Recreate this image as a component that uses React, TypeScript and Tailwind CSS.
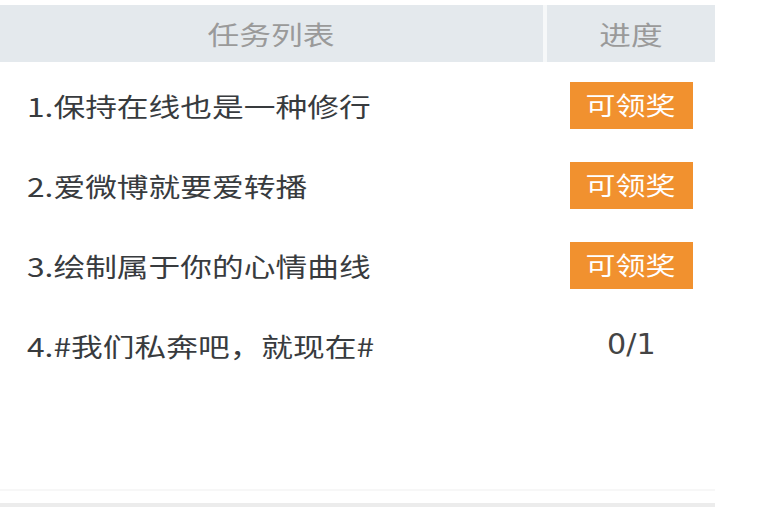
const tasks = [
  { id: 1, title: "1.保持在线也是一种修行", done: true },
  { id: 2, title: "2.爱微博就要爱转播", done: true },
  { id: 3, title: "3.绘制属于你的心情曲线", done: true },
  { id: 4, title: "4.#我们私奔吧，就现在#", done: false, progress: "0/1" },
];

export default function App() {
  return (
    <div
      className="w-[768px] h-[510px] bg-white overflow-hidden"
      style={{ fontFamily: '"Noto Sans CJK SC", "Noto Sans", sans-serif' }}
    >
      <div className="w-[715px] pt-[5px]">
        {/* header */}
        <div className="flex h-[57px] bg-[#e4e9ed]">
          <div className="w-[543px] flex items-center justify-center text-[26px] text-[#9a9a9a]">
            <span className="inline-block scale-x-[1.22]">任务列表</span>
          </div>
          <div className="w-[4px] bg-[#f6f8f9]" />
          <div className="flex-1 flex items-center justify-center text-[26px] text-[#9a9a9a]">
            <span className="inline-block scale-x-[1.22]">进度</span>
          </div>
        </div>

        {/* rows */}
        <div className="pt-[3px] h-[427px]">
          {tasks.map((task) => (
            <div key={task.id} className="flex h-[80px] items-center">
              <div className="w-[543px] pl-[27px] text-[26px] text-[#383b3e]">
                <span className="inline-block origin-left scale-x-[1.22]">{task.title}</span>
              </div>
              <div className="w-[4px]" />
              <div className="flex-1 flex items-center justify-center">
                {task.done ? (
                  <div className="w-[123px] h-[47px] bg-[#f1912f] flex items-center justify-center text-white text-[25px]">
                    <span className="inline-block scale-x-[1.2]">可领奖</span>
                  </div>
                ) : (
                  <span
                    className="inline-block text-[29px] text-[#444] scale-x-[1.04]"
                    style={{ fontFamily: '"DejaVu Sans", "Liberation Sans", sans-serif' }}
                  >
                    {task.progress}
                  </span>
                )}
              </div>
            </div>
          ))}
        </div>

        <div className="h-[2px] bg-[#f7f7f7]" />
        <div className="h-[12px]" />
        <div className="h-[4px] bg-[#ececec]" />
      </div>
    </div>
  );
}
